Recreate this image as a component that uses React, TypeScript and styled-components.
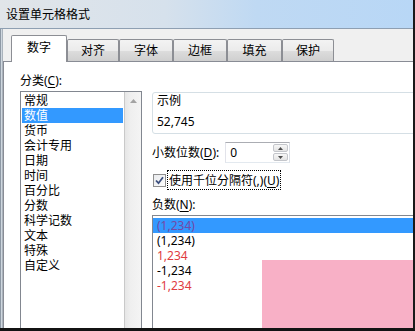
import React from 'react';
import styled, { createGlobalStyle } from 'styled-components';

const GlobalStyle = createGlobalStyle`
  html, body {
    margin: 0;
    padding: 0;
    background: #ffffff;
  }
  body {
    font-family: "Noto Sans", "Noto Sans CJK SC", sans-serif;
    font-size: 12px;
    color: #000000;
  }
`;

const Window = styled.div`
  position: relative;
  width: 415px;
  height: 331px;
  box-sizing: border-box;
  border-right: 2px solid #1a1a1a;
  border-bottom: 3px solid #131313;
  overflow: hidden;
  display: flex;
  flex-direction: column;
  background: #dbe3eb;
`;

const TitleBar = styled.div`
  height: 28px;
  flex-shrink: 0;
  display: flex;
  align-items: center;
  padding-left: 6px;
  border-bottom: 1px solid #8e9fb2;
  background: linear-gradient(to right, #e1e5e9 0%, #d6e1ec 40%, #bfd9f3 62%, #b8d7f6 100%);
  font-size: 12px;
  line-height: 15px;
  color: #000;
`;

const Body = styled.div`
  flex: 1;
  display: flex;
  min-height: 0;
`;

const Frame = styled.div`
  width: 3px;
  flex-shrink: 0;
  background: linear-gradient(to right, #8e99a5 0 1px, #cfd7df 1px 2px, #aab3bc 2px);
`;

const Client = styled.div`
  flex: 1;
  display: flex;
  flex-direction: column;
  background: #f0f0f0;
  min-width: 0;
`;

const TabStrip = styled.div`
  height: 32px;
  flex-shrink: 0;
  box-sizing: border-box;
  display: flex;
  align-items: flex-end;
  padding-left: 8px;
`;

const Tab = styled.div<{ $width: number; $active?: boolean }>`
  position: relative;
  z-index: ${(p) => (p.$active ? 2 : 1)};
  width: ${(p) => p.$width}px;
  height: ${(p) => (p.$active ? 27 : 22)}px;
  margin-bottom: ${(p) => (p.$active ? -1 : 0)}px;
  padding-bottom: ${(p) => (p.$active ? 3 : 0)}px;
  box-sizing: border-box;
  display: flex;
  align-items: center;
  justify-content: center;
  border: 1px solid #8c8e94;
  border-bottom: none;
  border-radius: 2px 2px 0 0;
  background: ${(p) =>
    p.$active
      ? '#ffffff'
      : 'linear-gradient(to bottom, #f3f3f3 0%, #ebebeb 50%, #dddddd 51%, #cfcfcf 100%)'};
  font-size: 12px;
  line-height: 15px;
`;

const Panel = styled.div`
  flex: 1;
  display: flex;
  background: #ffffff;
  border-top: 1px solid #898c95;
  border-left: 1px solid #898c95;
  overflow: hidden;
  min-height: 0;
`;

const LeftColumn = styled.div`
  width: 122px;
  flex-shrink: 0;
  margin-left: 16px;
  padding-top: 11px;
  display: flex;
  flex-direction: column;
`;

const RightColumn = styled.div`
  flex: 1;
  margin-left: 10px;
  margin-right: -30px;
  padding-top: 30px;
  display: flex;
  flex-direction: column;
`;

const Label = styled.div`
  font-size: 12px;
  line-height: 15px;
  white-space: nowrap;
`;

const Key = styled.span`
  text-decoration: underline;
  text-underline-offset: 2px;
`;

const ListBox = styled.div`
  flex: 1;
  margin-top: 3px;
  margin-bottom: -6px;
  box-sizing: border-box;
  border: 1px solid #828790;
  display: flex;
`;

const ListItems = styled.div`
  flex: 1;
  padding: 1px;
  display: flex;
  flex-direction: column;
`;

const ListItem = styled.div<{ $selected?: boolean }>`
  height: 15px;
  line-height: 15px;
  padding-left: 2px;
  font-size: 12px;
  white-space: nowrap;
  background: ${(p) => (p.$selected ? '#3399ff' : 'transparent')};
  color: ${(p) => (p.$selected ? '#ffffff' : '#000000')};
`;

const ScrollBar = styled.div`
  width: 17px;
  flex-shrink: 0;
  box-sizing: border-box;
  border-left: 1px solid #c9c9c9;
  background: linear-gradient(to right, #e6e6e6 0%, #efefef 35%, #f4f4f4 100%);
  display: flex;
  flex-direction: column;
  align-items: center;
`;

const ScrollArrow = styled.div`
  height: 17px;
  display: flex;
  align-items: center;
  justify-content: center;
`;

const GroupBox = styled.div`
  box-sizing: border-box;
  height: 42px;
  border: 1px solid #d5dfe5;
  border-radius: 3px;
  padding: 0 4px;
  display: flex;
  flex-direction: column;
`;

const SampleValue = styled.div`
  margin-top: 6px;
  font-size: 12px;
  line-height: 15px;
`;

const Row = styled.div<{ $top: number }>`
  display: flex;
  align-items: center;
  margin-top: ${(p) => p.$top}px;
`;

const SpinBox = styled.div`
  margin-left: 6px;
  width: 65px;
  height: 21px;
  box-sizing: border-box;
  border: 1px solid #abadb3;
  border-left-color: #e2e3ea;
  border-bottom-color: #e3e9ef;
  border-right-color: #dbdfe6;
  display: flex;
  align-items: center;
  justify-content: space-between;
  padding-left: 4px;
  padding-right: 1px;
`;

const SpinValue = styled.span`
  font-size: 12px;
  line-height: 15px;
`;

const SpinButtons = styled.div`
  width: 15px;
  display: flex;
  flex-direction: column;
  gap: 1px;
`;

const SpinButton = styled.div`
  height: 8px;
  box-sizing: border-box;
  border: 1px solid #c4c6cb;
  border-radius: 2px;
  background: linear-gradient(to bottom, #f7f7f7, #e4e4e4);
  display: flex;
  align-items: center;
  justify-content: center;
`;

const CheckBox = styled.div`
  width: 13px;
  height: 13px;
  box-sizing: border-box;
  margin-left: 1px;
  border: 1px solid #8f8f8f;
  background: linear-gradient(135deg, #e9ebee, #fdfdfd);
  display: flex;
  align-items: center;
  justify-content: center;
`;

const FocusLabel = styled.div`
  margin-left: 1px;
  height: 20px;
  box-sizing: border-box;
  padding: 0 1px;
  border: 1px dotted #000000;
  display: flex;
  align-items: center;
  font-size: 12px;
  white-space: nowrap;
`;

const NegList = styled.div`
  flex: 1;
  margin-top: 3px;
  margin-bottom: -6px;
  box-sizing: border-box;
  border: 1px solid #828790;
  padding-top: 2px;
  display: flex;
  flex-direction: column;
`;

const NegItem = styled.div<{ $red?: boolean; $selected?: boolean }>`
  height: 15px;
  line-height: 15px;
  padding-left: 4px;
  font-size: 12px;
  background: ${(p) => (p.$selected ? '#3399ff' : 'transparent')};
  color: ${(p) => (p.$selected ? '#7448a6' : p.$red ? '#e03b3f' : '#000000')};
`;

const Watermark = styled.div`
  position: absolute;
  right: 0;
  bottom: 0;
  width: 151px;
  height: 68px;
  background: #f8b0c6;
  z-index: 5;
`;

const tabs = [
  { label: '数字', width: 56 },
  { label: '对齐', width: 52 },
  { label: '字体', width: 54 },
  { label: '边框', width: 54 },
  { label: '填充', width: 55 },
  { label: '保护', width: 52 },
];

const categories = ['常规', '数值', '货币', '会计专用', '日期', '时间', '百分比', '分数', '科学记数', '文本', '特殊', '自定义'];

const negatives = [
  { text: '(1,234)', red: true },
  { text: '(1,234)', red: false },
  { text: '1,234', red: true },
  { text: '-1,234', red: false },
  { text: '-1,234', red: true },
];

const App = () => {
  return (
    <>
      <GlobalStyle />
      <Window>
        <TitleBar>设置单元格格式</TitleBar>
        <Body>
          <Frame />
          <Client>
            <TabStrip>
              {tabs.map((t, i) => (
                <Tab key={t.label} $width={t.width} $active={i === 0}>
                  {t.label}
                </Tab>
              ))}
            </TabStrip>
            <Panel>
              <LeftColumn>
                <Label>
                  分类(<Key>C</Key>):
                </Label>
                <ListBox>
                  <ListItems>
                    {categories.map((c, i) => (
                      <ListItem key={c} $selected={i === 1}>
                        {c}
                      </ListItem>
                    ))}
                  </ListItems>
                  <ScrollBar>
                    <ScrollArrow>
                      <svg width="7" height="4" viewBox="0 0 7 4">
                        <path d="M0 4 L3.5 0 L7 4 Z" fill="#a3a3a3" />
                      </svg>
                    </ScrollArrow>
                  </ScrollBar>
                </ListBox>
              </LeftColumn>
              <RightColumn>
                <GroupBox>
                  <Label>示例</Label>
                  <SampleValue>52,745</SampleValue>
                </GroupBox>
                <Row $top={8}>
                  <Label>
                    小数位数(<Key>D</Key>):
                  </Label>
                  <SpinBox>
                    <SpinValue>0</SpinValue>
                    <SpinButtons>
                      <SpinButton>
                        <svg width="5" height="3" viewBox="0 0 5 3">
                          <path d="M0 3 L2.5 0 L5 3 Z" fill="#4d4d4d" />
                        </svg>
                      </SpinButton>
                      <SpinButton>
                        <svg width="5" height="3" viewBox="0 0 5 3">
                          <path d="M0 0 L2.5 3 L5 0 Z" fill="#4d4d4d" />
                        </svg>
                      </SpinButton>
                    </SpinButtons>
                  </SpinBox>
                </Row>
                <Row $top={7}>
                  <CheckBox>
                    <svg width="9" height="9" viewBox="0 0 9 9">
                      <path d="M1 4.5 L3.5 7.2 L8 1.2" fill="none" stroke="#3c4f7e" strokeWidth="1.8" />
                    </svg>
                  </CheckBox>
                  <FocusLabel>
                    使用千位分隔符(,)(<Key>U</Key>)
                  </FocusLabel>
                </Row>
                <Row $top={7}>
                  <Label>
                    负数(<Key>N</Key>):
                  </Label>
                </Row>
                <NegList>
                  {negatives.map((n, i) => (
                    <NegItem key={i} $red={n.red} $selected={i === 0}>
                      {n.text}
                    </NegItem>
                  ))}
                </NegList>
              </RightColumn>
            </Panel>
          </Client>
        </Body>
        <Watermark />
      </Window>
    </>
  );
};

export default App;
